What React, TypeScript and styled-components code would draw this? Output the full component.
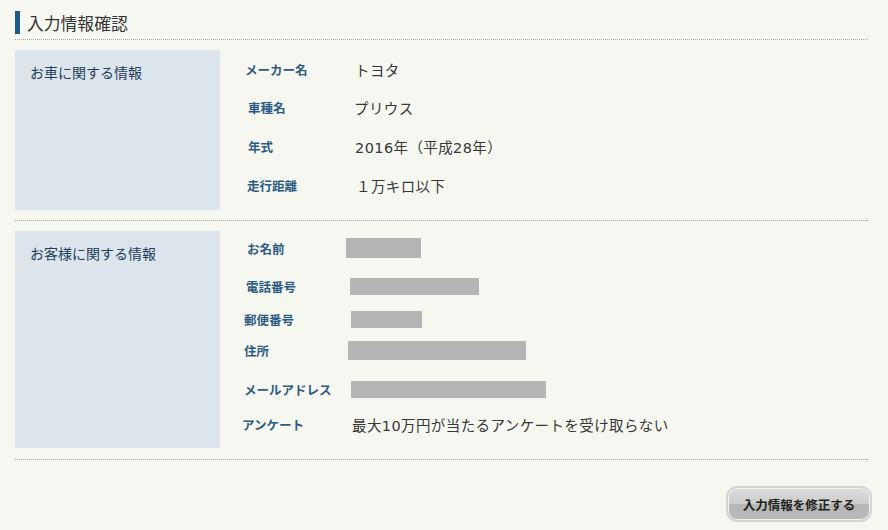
import React from "react";
import styled, { createGlobalStyle } from "styled-components";

const Global = createGlobalStyle`
  html, body { margin: 0; padding: 0; background: #f7f7f2; }
  body { font-family: "Noto Sans CJK JP", "Noto Sans", sans-serif; color: #333; }
`;

const Page = styled.div`
  width: 853px;
  padding: 11px 0 0 15px;
`;

const HeadingWrap = styled.div`
  padding-bottom: 5px;
  border-bottom: 1px dotted #a9a9a4;
`;

const Title = styled.h1`
  margin: 0;
  height: 23px;
  line-height: 24px;
  border-left: 5px solid #1d5a86;
  padding-left: 7px;
  font-size: 16.8px;
  font-weight: 400;
  color: #333;
`;

const Section = styled.section<{ $top: number; $bottom: number }>`
  display: flex;
  margin-top: ${(p) => p.$top}px;
  padding-bottom: ${(p) => p.$bottom}px;
  border-bottom: 1px dotted #a9a9a4;
`;

const SideCell = styled.div`
  width: 175px;
  flex: none;
  background: #dce5ec;
  padding: 12px 15px;
  font-size: 14px;
  line-height: 20px;
  color: #1f3e5c;
`;

const Rows = styled.div`
  flex: 1;
  padding-left: 25px;
  display: flex;
  flex-direction: column;
`;

const Row = styled.div<{ $h: number }>`
  height: ${(p) => p.$h}px;
  display: flex;
  align-items: center;
`;

const Label = styled.div<{ $shift?: number }>`
  width: ${(p) => 110 - (p.$shift ?? 0)}px;
  margin-left: ${(p) => p.$shift ?? 0}px;
  flex: none;
  font-size: 12.5px;
  font-weight: 700;
  color: #2b5c84;
`;

const Value = styled.div<{ $shift?: number }>`
  margin-left: ${(p) => p.$shift ?? 0}px;
  font-family: "DejaVu Sans", "Noto Sans CJK JP", sans-serif;
  font-size: 14.5px;
  letter-spacing: 0.4px;
  color: #383838;
`;

const Masked = styled.div<{ $w: number; $h: number; $shift: number }>`
  margin-left: ${(p) => p.$shift}px;
  width: ${(p) => p.$w}px;
  height: ${(p) => p.$h}px;
  background: #b5b5b5;
`;

const Actions = styled.div`
  display: flex;
  justify-content: flex-end;
  margin: 26px -4px 0 0;
`;

const Button = styled.button`
  width: 146px;
  height: 36px;
  border-radius: 11px;
  border: 2px solid #d4d4d2;
  box-shadow: inset 0 0 0 1px #f4f4f4;
  background: linear-gradient(#dcdcdc 0%, #cdcdcd 48%, #b7b7b7 52%, #b9b9b9 100%);
  font-family: "Noto Sans CJK JP", sans-serif;
  font-size: 12.5px;
  font-weight: 700;
  color: #222;
  padding: 0;
  cursor: pointer;
`;

type Masks = { w: number; h: number; s: number };

export default function App() {
  const car: [string, string, number, number, number][] = [
    ["メーカー名", "トヨタ", 38, 0, 0],
    ["車種名", "プリウス", 38, 3, -1],
    ["年式", "2016年（平成28年）", 40, 3, 0],
    ["走行距離", "１万キロ以下", 38, 2, 1],
  ];
  const customer: [string, Masks, number, number][] = [
    ["お名前", { w: 75, h: 20, s: -9 }, 34, 2],
    ["電話番号", { w: 129, h: 17, s: -5 }, 42, 1],
    ["郵便番号", { w: 71, h: 17, s: -4 }, 24, -1],
    ["住所", { w: 178, h: 19, s: -7 }, 38, -1],
    ["メールアドレス", { w: 195, h: 17, s: -4 }, 40, -1],
  ];
  return (
    <>
      <Global />
      <Page>
        <HeadingWrap>
          <Title>入力情報確認</Title>
        </HeadingWrap>
        <Section $top={10} $bottom={10}>
          <SideCell>お車に関する情報</SideCell>
          <Rows>
            {car.map(([l, v, h, s, vs]) => (
              <Row key={l} $h={h}>
                <Label $shift={s}>{l}</Label>
                <Value $shift={vs}>{v}</Value>
              </Row>
            ))}
            <Row $h={6} />
          </Rows>
        </Section>
        <Section $top={10} $bottom={11}>
          <SideCell>お客様に関する情報</SideCell>
          <Rows>
            {customer.map(([l, m, h, s]) => (
              <Row key={l} $h={h}>
                <Label $shift={s}>{l}</Label>
                <Masked $w={m.w} $h={m.h} $shift={m.s} />
              </Row>
            ))}
            <Row $h={30}>
              <Label $shift={-3}>アンケート</Label>
              <Value $shift={-3}>最大10万円が当たるアンケートを受け取らない</Value>
            </Row>
            <Row $h={9} />
          </Rows>
        </Section>
        <Actions>
          <Button>入力情報を修正する</Button>
        </Actions>
      </Page>
    </>
  );
}
